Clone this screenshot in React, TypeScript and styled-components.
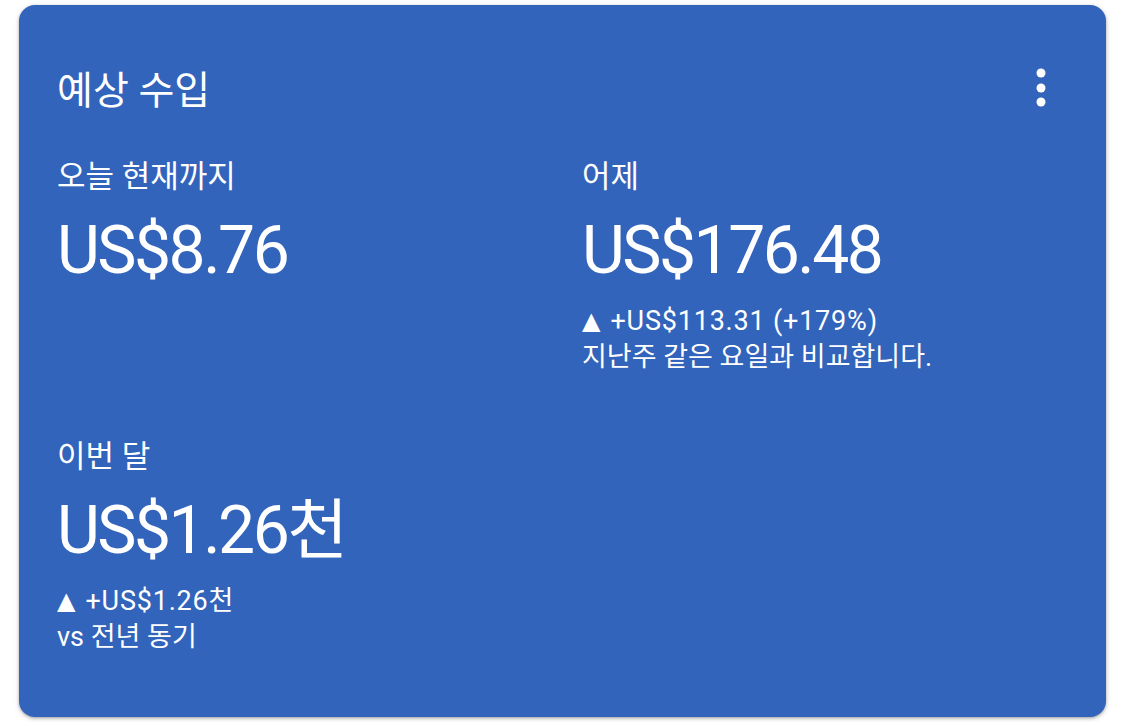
import styled, { createGlobalStyle } from "styled-components";

const GlobalStyle = createGlobalStyle`
  html, body {
    margin: 0;
    padding: 0;
    background: #ffffff;
  }
  body {
    font-family: Roboto, "Noto Sans CJK KR", sans-serif;
  }
`;

const Page = styled.div`
  padding: 5px 19px;
  width: 1125px;
  box-sizing: border-box;
`;

const Card = styled.div`
  width: 1087px;
  height: 712px;
  box-sizing: border-box;
  background: #3264bb;
  border-radius: 16px;
  box-shadow: 0 1px 3px rgba(0, 0, 0, 0.3), 0 2px 6px rgba(0, 0, 0, 0.12);
  padding: 54px 38px 0;
  color: #ffffff;
`;

const Header = styled.div`
  display: flex;
  align-items: center;
  justify-content: space-between;
  height: 64px;
  margin-bottom: -3px;
`;

const Title = styled.h2`
  margin: 0;
  font-family: Roboto, "Noto Sans CJK KR", sans-serif;
  font-size: 39px;
  font-weight: 400;
  line-height: 44px;
`;

const MenuButton = styled.button`
  border: none;
  background: none;
  padding: 0;
  margin: -6px 22px 0 0;
  width: 10px;
  height: 40px;
  display: flex;
  align-items: center;
  justify-content: center;
  color: #ffffff;
`;

const Grid = styled.div`
  display: grid;
  grid-template-columns: 525px 1fr;
  row-gap: 64px;
  margin-top: 39px;
`;

const Metric = styled.div`
  display: flex;
  flex-direction: column;
`;

const Label = styled.div`
  font-family: Roboto, "Noto Sans CJK KR", sans-serif;
  font-size: 31px;
  line-height: 36px;
`;

const Value = styled.div`
  margin-top: 16px;
  font-family: Roboto, "Noto Sans CJK KR", sans-serif;
  font-size: 66px;
  line-height: 80px;
  letter-spacing: -2.5px;
`;

const Notes = styled.div`
  margin-top: 12px;
  display: flex;
  flex-direction: column;
`;

const Change = styled.div`
  font-family: Roboto, "Noto Sans CJK KR", sans-serif;
  font-size: 27px;
  line-height: 36px;
  letter-spacing: 0.8px;
  display: flex;
  align-items: center;
`;

const Arrow = styled.span`
  font-family: "DejaVu Sans", sans-serif;
  font-size: 24px;
  letter-spacing: 0;
  margin-right: 10px;
`;

const Compare = styled.div`
  font-family: Roboto, "Noto Sans CJK KR", sans-serif;
  font-size: 27px;
  line-height: 36px;
`;

interface Stat {
  label: string;
  value: string;
  change?: string;
  compare?: string;
}

const stats: Stat[] = [
  { label: "오늘 현재까지", value: "US$8.76" },
  {
    label: "어제",
    value: "US$176.48",
    change: "+US$113.31 (+179%)",
    compare: "지난주 같은 요일과 비교합니다.",
  },
  {
    label: "이번 달",
    value: "US$1.26천",
    change: "+US$1.26천",
    compare: "vs 전년 동기",
  },
];

function MoreIcon() {
  return (
    <svg width="10" height="40" viewBox="0 0 10 40" fill="currentColor">
      <circle cx="5" cy="5" r="4.5" />
      <circle cx="5" cy="20" r="4.5" />
      <circle cx="5" cy="34" r="4.5" />
    </svg>
  );
}

export default function App() {
  return (
    <Page>
      <GlobalStyle />
      <Card>
        <Header>
          <Title>예상 수입</Title>
          <MenuButton aria-label="더보기">
            <MoreIcon />
          </MenuButton>
        </Header>
        <Grid>
          {stats.map((stat) => (
            <Metric key={stat.label}>
              <Label>{stat.label}</Label>
              <Value>{stat.value}</Value>
              {stat.change && (
                <Notes>
                  <Change>
                    <Arrow>▲</Arrow>
                    {stat.change}
                  </Change>
                  <Compare>{stat.compare}</Compare>
                </Notes>
              )}
            </Metric>
          ))}
        </Grid>
      </Card>
    </Page>
  );
}
